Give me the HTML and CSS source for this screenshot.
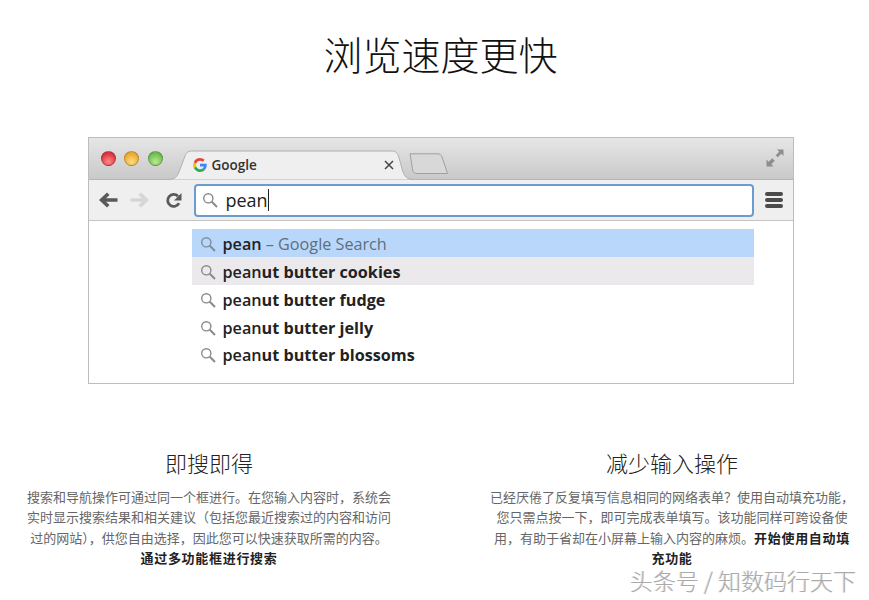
FILE: index.html
```html
<!DOCTYPE html>
<html lang="zh-CN">
<head>
<meta charset="utf-8">
<title>浏览速度更快</title>
<link rel="stylesheet" href="styles.css">
</head>
<body>
<main class="page">
  <h1 class="title">浏览速度更快</h1>
  <section class="browser">
    <div class="titlebar">
      <div class="lights">
        <span class="light red"></span>
        <span class="light yellow"></span>
        <span class="light green"></span>
      </div>
      <div class="tab">
        <svg class="tab-shape" width="244" height="30" viewBox="0 0 244 30"><path d="M0 29.500C6 29 8 27 10 22L16 6C17.500 2 19.500 1 24 1H222C226 1 228 2 229.500 6L234 22C236 27 238 29 244 29.500" fill="#efefef" stroke="#b0b0b0"/></svg>
        <svg class="g-logo" width="14" height="14" viewBox="0 0 24 24"><path d="M23.500 12.300c0-.9-.1-1.600-.2-2.300H12v4.400h6.500c-.3 1.500-1.100 2.800-2.400 3.600l3.700 2.900c2.200-2 3.700-5 3.700-8.600z" fill="#4285f4"/><path d="M12 24c3.200 0 6-1.100 7.900-2.900L16.100 18c-1 .7-2.400 1.200-4.100 1.200-3.100 0-5.800-2.100-6.700-5L1.400 17.300C3.300 21.300 7.400 24 12 24z" fill="#34a853"/><path d="M5.300 14.300c-.5-1.500-.5-3.100 0-4.600L1.400 6.700c-1.700 3.300-1.700 7.300 0 10.600z" fill="#fbbc05"/><path d="M12 4.800c1.800 0 3.300.6 4.600 1.800l3.400-3.400C17.900 1.200 15.200 0 12 0 7.400 0 3.300 2.700 1.400 6.700l3.900 3c.9-2.800 3.600-4.900 6.700-4.900z" fill="#ea4335"/></svg>
        <span class="tab-label">Google</span>
        <svg class="tab-close" width="10" height="10" viewBox="0 0 10 10"><path d="M1 1L9 9M9 1L1 9" stroke="#444" stroke-width="1.500"/></svg>
      </div>
      <svg class="newtab" width="40" height="22" viewBox="0 0 40 22"><path d="M1 .8H28C31 .8 32 1.500 33 4L38.500 20.500H8C5.500 20.500 4.500 19.500 3.800 17.500Z" fill="#d8d8d8" stroke="#a0a0a0"/></svg>
      <svg class="expand" width="18" height="18" viewBox="0 0 18 18"><path d="M17.500 .5V7L15.300 4.800L11.800 8.300L9.700 6.200L13.200 2.700L11 .5Z M.5 17.500V10.500L2.700 12.700L6.200 9.200L8.800 11.800L5.300 15.300L7.500 17.500Z" fill="#8e8e8e"/></svg>
    </div>
    <div class="toolbar">
      <svg class="nav back" width="20" height="16" viewBox="0 0 20 16"><path d="M9 .5L1 8L9 15.500L11.500 13L8 9.800H19.500V6.200H8L11.500 3Z" fill="#5a5a5a"/></svg>
      <svg class="nav forward" width="20" height="16" viewBox="0 0 20 16"><path d="M11 .5L19 8L11 15.500L8.500 13L12 9.800H.5V6.200H12L8.500 3Z" fill="#d6d6d6"/></svg>
      <svg class="nav reload" width="17" height="17" viewBox="0 0 17 17"><path d="M14 11.200A6 6 0 1 1 13 4.300" fill="none" stroke="#5a5a5a" stroke-width="2.800"/><path d="M16.500 1V8.500H9Z" fill="#5a5a5a"/></svg>
      <div class="omnibox">
        <svg class="search" width="16" height="16" viewBox="0 0 16 16"><circle cx="6.300" cy="6.300" r="4.600" fill="none" stroke="#8a8a8a" stroke-width="1.400"/><path d="M9.800 9.800L15 15" stroke="#8a8a8a" stroke-width="2"/></svg>
        <span class="query">pean</span><span class="caret"></span>
      </div>
      <div class="menu"><span></span><span></span><span></span></div>
    </div>
    <ul class="suggestions">
      <li class="row selected"><svg class="search" width="16" height="16" viewBox="0 0 16 16"><circle cx="6.300" cy="6.300" r="4.600" fill="none" stroke="#7f8d9c" stroke-width="1.400"/><path d="M9.800 9.800L15 15" stroke="#7f8d9c" stroke-width="2"/></svg><span class="s-text"><span class="strong-part">pean</span> <span class="muted">– Google Search</span></span></li>
      <li class="row hover"><svg class="search" width="16" height="16" viewBox="0 0 16 16"><circle cx="6.300" cy="6.300" r="4.600" fill="none" stroke="#8a8a8a" stroke-width="1.400"/><path d="M9.800 9.800L15 15" stroke="#8a8a8a" stroke-width="2"/></svg><span class="s-text"><span class="stem">pean</span>ut butter cookies</span></li>
      <li class="row"><svg class="search" width="16" height="16" viewBox="0 0 16 16"><circle cx="6.300" cy="6.300" r="4.600" fill="none" stroke="#8a8a8a" stroke-width="1.400"/><path d="M9.800 9.800L15 15" stroke="#8a8a8a" stroke-width="2"/></svg><span class="s-text"><span class="stem">pean</span>ut butter fudge</span></li>
      <li class="row"><svg class="search" width="16" height="16" viewBox="0 0 16 16"><circle cx="6.300" cy="6.300" r="4.600" fill="none" stroke="#8a8a8a" stroke-width="1.400"/><path d="M9.800 9.800L15 15" stroke="#8a8a8a" stroke-width="2"/></svg><span class="s-text"><span class="stem">pean</span>ut butter jelly</span></li>
      <li class="row last"><svg class="search" width="16" height="16" viewBox="0 0 16 16"><circle cx="6.300" cy="6.300" r="4.600" fill="none" stroke="#8a8a8a" stroke-width="1.400"/><path d="M9.800 9.800L15 15" stroke="#8a8a8a" stroke-width="2"/></svg><span class="s-text"><span class="stem">pean</span>ut butter blossoms</span></li>
    </ul>
  </section>
  <section class="features">
    <article class="feature">
      <h2 class="feature-title">即搜即得</h2>
      <p class="feature-text">搜索和导航操作可通过同一个框进行。在您输入内容时，系统会<br>实时显示搜索结果和相关建议（包括您最近搜索过的内容和访问<br>过的网站），供您自由选择，因此您可以快速获取所需的内容。<br><b>通过多功能框进行搜索</b></p>
    </article>
    <article class="feature">
      <h2 class="feature-title">减少输入操作</h2>
      <p class="feature-text">已经厌倦了反复填写信息相同的网络表单？使用自动填充功能，<br>您只需点按一下，即可完成表单填写。该功能同样可跨设备使<br>用，有助于省却在小屏幕上输入内容的麻烦。<b>开始使用自动填<br>充功能</b></p>
    </article>
  </section>
  <div class="watermark">头条号 / 知数码行天下</div>
</main>
</body>
</html>
```
FILE: styles.css
```css
* { box-sizing: border-box; }
html, body { margin: 0; padding: 0; background: #fff; }
body { height: 600px; overflow: hidden; }
.page {
  position: relative;
  width: 869px;
  height: 600px;
  padding-left: 12px;
  font-family: "Noto Sans CJK SC", "Liberation Sans", sans-serif;
}
.title {
  margin: 0;
  padding-top: 25px;
  height: 137px;
  text-align: center;
  font-size: 39px;
  line-height: 56px;
  font-weight: 300;
  color: #111;
}
.browser {
  width: 706px;
  height: 247px;
  margin: 0 auto;
  border: 1px solid #bdbdbd;
  font-family: "Open Sans", "Liberation Sans", sans-serif;
}
.titlebar {
  position: relative;
  display: flex;
  align-items: flex-end;
  height: 42px;
  background: linear-gradient(#e6e6e6, #c9c9c9);
  border-bottom: 1px solid #b5b5b5;
}
.lights {
  display: flex;
  gap: 8.500px;
  align-self: flex-start;
  padding: 13px 0 0 12px;
  width: 80px;
}
.light {
  flex: none;
  width: 15px;
  height: 15px;
  border-radius: 50%;
  border: 1px solid rgba(0,0,0,.22);
}
.red { background: radial-gradient(circle at 50% 75%, #ff8a8a, #dd3340 70%); }
.yellow { background: radial-gradient(circle at 50% 75%, #ffdc80, #ecaa30 70%); }
.green { background: radial-gradient(circle at 50% 75%, #b9ea8e, #6fbd52 70%); }
.tab {
  position: relative;
  display: flex;
  align-items: center;
  width: 244px;
  height: 30px;
  margin-bottom: -1px;
  padding: 0 0 0 24px;
}
.tab-shape { position: absolute; left: 0; top: 0; }
.g-logo, .tab-label, .tab-close { position: relative; }
.tab-label { margin-left: 5px; font-size: 13.500px; font-weight: 600; color: #333; width: 172px; }
.newtab { margin: 0 0 4px -4px; }
.expand { position: absolute; right: 9px; top: 11px; }
.toolbar {
  display: flex;
  align-items: center;
  height: 41px;
  background: #efefef;
  border-bottom: 1px solid #c4c4c4;
}
.nav { flex: none; }
.back { margin-left: 9px; }
.forward { margin-left: 12px; }
.reload { margin-left: 15px; }
.omnibox {
  display: flex;
  align-items: center;
  width: 560px;
  height: 33px;
  margin-left: 12px;
  padding-left: 6px;
  background: #fff;
  border: 2px solid #6c9ccb;
  border-radius: 4px;
}
.omnibox .search { margin-right: 8px; }
.query { font-size: 18px; color: #222; }
.caret { width: 1px; height: 22px; background: #222; }
.menu {
  display: flex;
  flex-direction: column;
  gap: 2.500px;
  margin-left: 11px;
}
.menu span { display: block; width: 18px; height: 3.500px; border-radius: 2px; background: #4b4b4b; }
.suggestions {
  list-style: none;
  width: 562px;
  margin: 8px 0 0 103px;
  padding: 0;
}
.row {
  display: flex;
  align-items: center;
  height: 28px;
  padding: 1px 0 0 8px;
  font-size: 16.200px;
  font-weight: 700;
  color: #222;
}
.row.last { height: 26px; }
.row .search { margin-right: 7px; }
.s-text { white-space: pre; }
.stem { font-weight: 600; }
.strong-part { font-weight: 600; }
.muted { font-weight: 400; color: #5f6f7c; }
.selected { background: #b9d7fb; }
.hover { background: #ece9ec; }
.features {
  display: grid;
  grid-template-columns: 364px 364px;
  column-gap: 99px;
  margin: 63px 0 0 15px;
}
.feature { text-align: center; }
.feature-title {
  margin: 0 0 10px;
  font-size: 22px;
  line-height: 30px;
  font-weight: 300;
  color: #222;
}
.feature-text {
  margin: 0;
  font-size: 13px;
  line-height: 20.300px;
  color: #666;
  white-space: nowrap;
}
.feature-text b { color: #222; letter-spacing: .7px; }
.watermark {
  position: absolute;
  left: 630px;
  top: 569px;
  font-size: 23px;
  line-height: 23px;
  color: #aaa;
  font-weight: 300;
  white-space: nowrap;
  text-shadow: 1px 1px 0 #fff, -1px 0 0 #ddd;
}
```
